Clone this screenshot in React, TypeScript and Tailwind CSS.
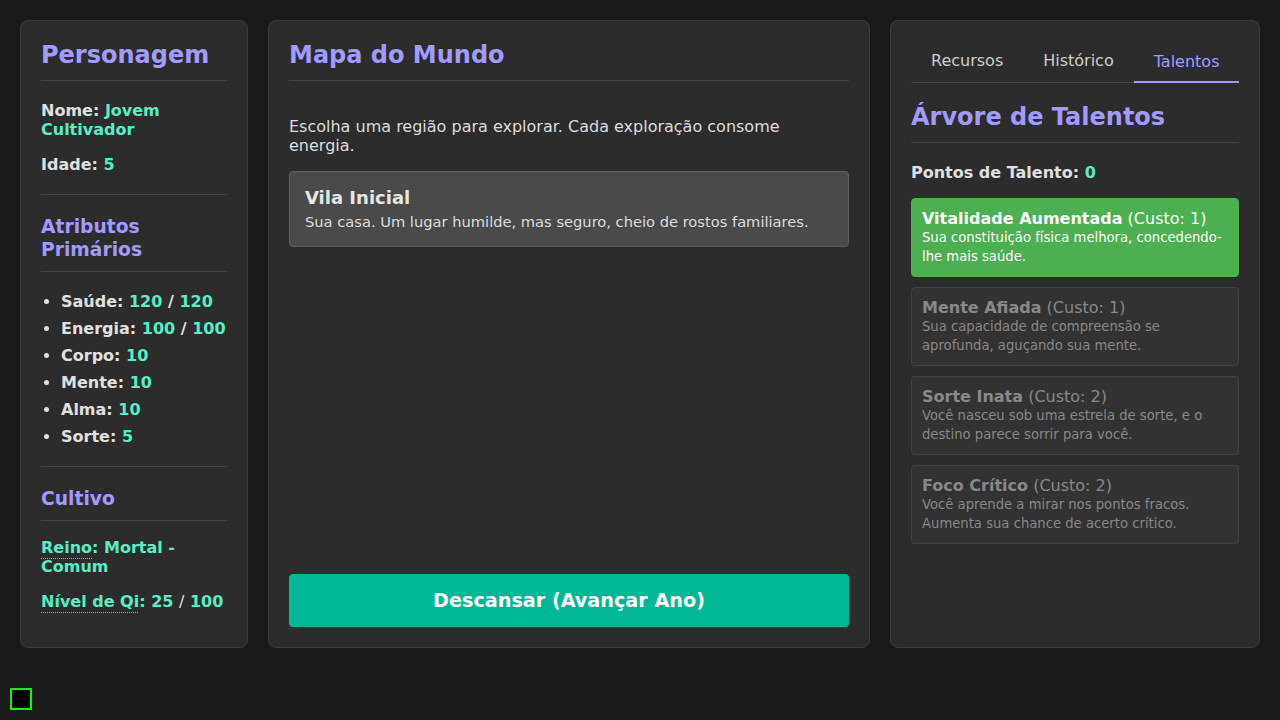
import React from "react";

const talentos = [
  { nome: "Vitalidade Aumentada", custo: 1, desc: "Sua constituição física melhora, concedendo-lhe mais saúde.", ativo: true },
  { nome: "Mente Afiada", custo: 1, desc: "Sua capacidade de compreensão se aprofunda, aguçando sua mente.", ativo: false },
  { nome: "Sorte Inata", custo: 2, desc: "Você nasceu sob uma estrela de sorte, e o destino parece sorrir para você.", ativo: false },
  { nome: "Foco Crítico", custo: 2, desc: "Você aprende a mirar nos pontos fracos. Aumenta sua chance de acerto crítico.", ativo: false },
];

function V({ children }: { children: React.ReactNode }) {
  return <span className="text-[#55efc4]">{children}</span>;
}

const atributos: [string, React.ReactNode][] = [
  ["Saúde", <><V>120</V> / <V>120</V></>],
  ["Energia", <><V>100</V> / <V>100</V></>],
  ["Corpo", <V>10</V>],
  ["Mente", <V>10</V>],
  ["Alma", <V>10</V>],
  ["Sorte", <V>5</V>],
];

function H2({ children }: { children: React.ReactNode }) {
  return (
    <h2 className="text-[24px] leading-[29px] font-bold text-[#a29bfe] pb-[10px] mb-5 border-b border-[#444]">
      {children}
    </h2>
  );
}

function H3({ children }: { children: React.ReactNode }) {
  return (
    <h3 className="text-[18.72px] leading-[23px] font-bold text-[#a29bfe] pb-[10px] mb-5 border-b border-[#444]">
      {children}
    </h3>
  );
}

const dotted = "underline decoration-dotted decoration-[#a29bfe] decoration-1 underline-offset-[5px]";

export default function App() {
  return (
    <div
      className="min-h-screen bg-[#1a1a1a] text-[#e0e0e0] p-5"
      style={{ fontFamily: '"DejaVu Sans", Verdana, sans-serif' }}
    >
      <div className="grid grid-cols-[228px_602px_370px] gap-5 items-start">
        {/* Personagem */}
        <div className="h-[628px] bg-[#2c2c2c] border border-[#3d3d3d] rounded-lg p-5">
          <H2>Personagem</H2>
          <div className="font-bold text-[16px] leading-[19px]">
            <p className="mb-4">Nome: <V>Jovem Cultivador</V></p>
            <p>Idade: <V>5</V></p>
          </div>

          <div className="mt-5 pt-5 border-t border-[#444]">
            <H3>Atributos Primários</H3>
            <ul className="font-bold text-[16px] leading-[19px] list-disc pl-5 flex flex-col gap-2 marker:text-[#e0e0e0]">
              {atributos.map(([k, v]) => (
                <li key={k}>
                  {k}: {v}
                </li>
              ))}
            </ul>
          </div>

          <div className="mt-5 pt-5 border-t border-[#444]">
            <H3>Cultivo</H3>
            <div className="-mt-[3px] font-bold text-[16px] leading-[19px] text-[#55efc4]">
              <p className="mb-4">
                <span className={dotted}>Reino</span>: Mortal - Comum
              </p>
              <p>
                <span className={dotted}>Nível de Qi</span>: 25 <span className="text-[#e0e0e0] font-normal">/</span> 100
              </p>
            </div>
          </div>
        </div>

        {/* Mapa */}
        <div className="h-[628px] bg-[#2c2c2c] border border-[#3d3d3d] rounded-lg p-5 flex flex-col">
          <H2>Mapa do Mundo</H2>
          <p className="mt-4 mb-4 text-[16px] leading-[19px] text-[#dcdcdc]">
            Escolha uma região para explorar. Cada exploração consome energia.
          </p>
          <div className="bg-[#4a4a4a] border border-[#5e5e5e] rounded p-[15px]">
            <div className="text-[18px] leading-[21px] font-bold text-[#e6e6e6] mb-[5px]">Vila Inicial</div>
            <div className="text-[11pt] leading-[18px] text-[#dcdcdc]">
              Sua casa. Um lugar humilde, mas seguro, cheio de rostos familiares.
            </div>
          </div>
          <button className="mt-auto w-full bg-[#00b894] text-white rounded py-[15px] text-[19.2px] leading-[23px] font-bold">
            Descansar (Avançar Ano)
          </button>
        </div>

        {/* Talentos */}
        <div className="h-[628px] bg-[#2c2c2c] border border-[#3d3d3d] rounded-lg p-5">
          <div className="flex border-b border-[#444] mb-5">
            <button className="px-5 pt-[10px] pb-[12px] text-[16px] leading-[19px] text-[#cccccc]">Recursos</button>
            <button className="px-5 pt-[10px] pb-[12px] text-[16px] leading-[19px] text-[#cccccc]">Histórico</button>
            <button className="px-5 pt-[10px] pb-[10px] text-[16px] leading-[19px] text-[#a29bfe] border-b-2 border-[#a29bfe] -mb-px">
              Talentos
            </button>
          </div>
          <H2>Árvore de Talentos</H2>
          <p className="font-bold text-[16px] leading-[19px] mb-4">
            Pontos de Talento: <V>0</V>
          </p>
          <div className="flex flex-col gap-[10px]">
            {talentos.map((t) =>
              t.ativo ? (
                <div key={t.nome} className="bg-[#4caf50] border border-[#4caf50] rounded p-[10px] text-white">
                  <div className="text-[16px] leading-[19px]">
                    <span className="font-bold">{t.nome}</span> (Custo: {t.custo})
                  </div>
                  <div className="text-[13.2px] leading-[19px]">{t.desc}</div>
                </div>
              ) : (
                <div key={t.nome} className="bg-[#323232] border border-[#424242] rounded p-[10px] text-[#888888]">
                  <div className="text-[16px] leading-[19px]">
                    <span className="font-bold">{t.nome}</span> (Custo: {t.custo})
                  </div>
                  <div className="text-[13.2px] leading-[19px]">{t.desc}</div>
                </div>
              )
            )}
          </div>
        </div>
      </div>

      <div className="fixed left-[10px] bottom-[10px] w-[22px] h-[22px] bg-black border-2 border-[#00ff00]" />
    </div>
  );
}
